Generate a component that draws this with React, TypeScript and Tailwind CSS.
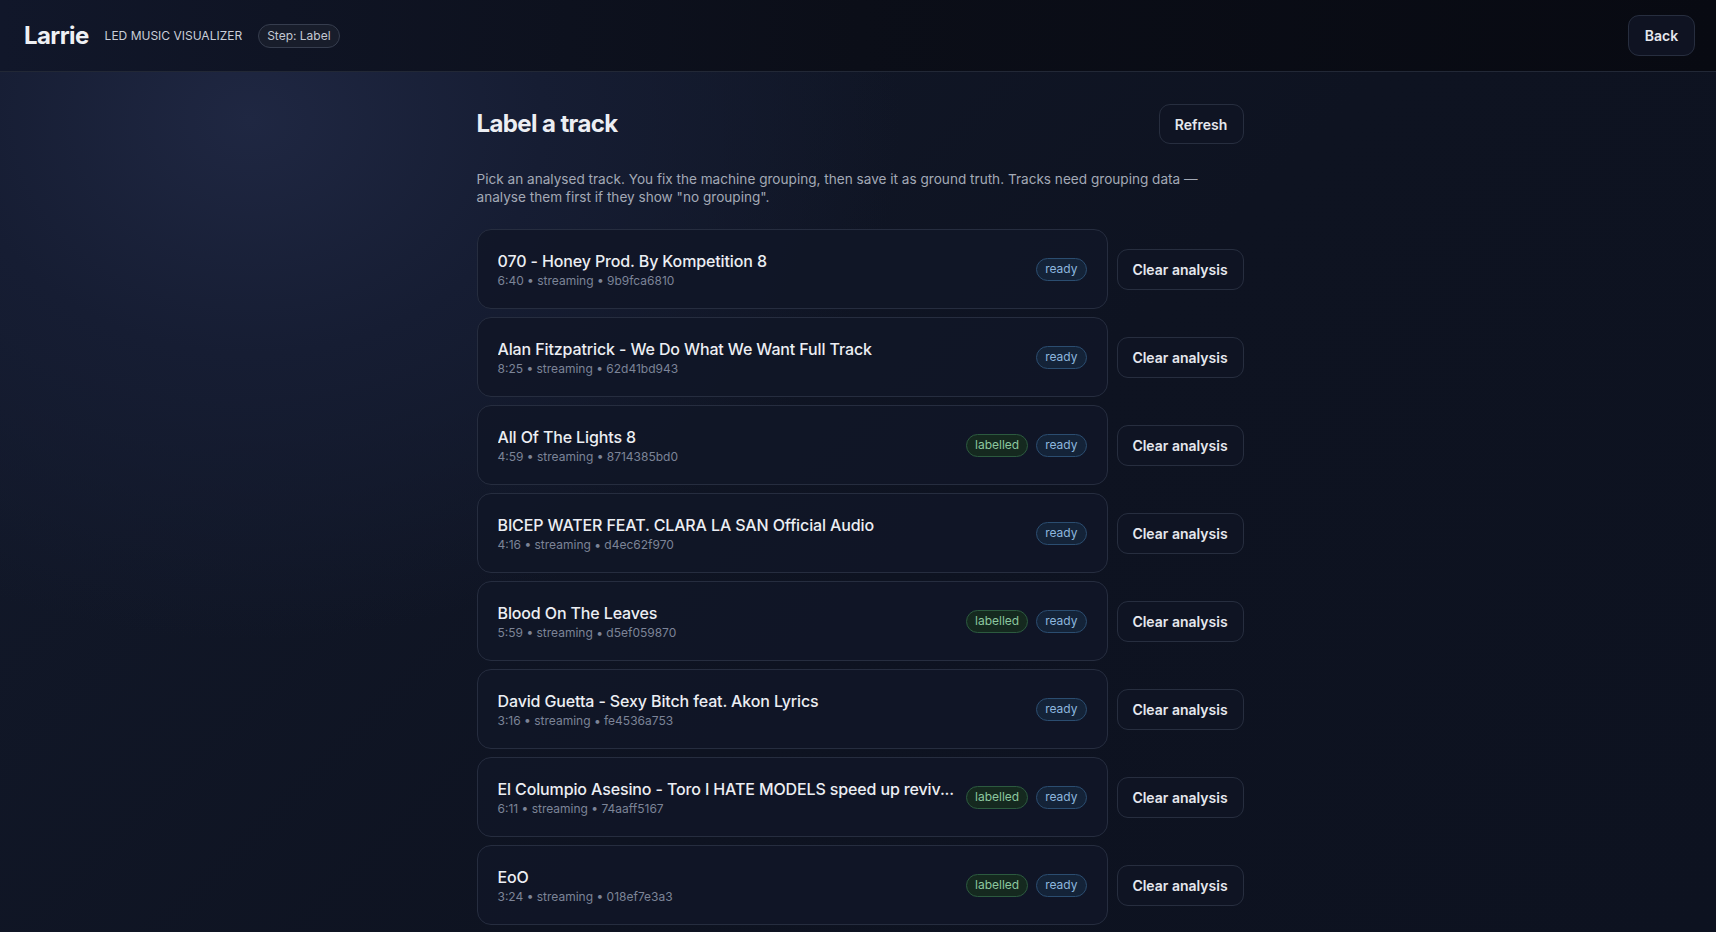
const tracks = [
  { title: '070 - Honey Prod. By Kompetition 8', duration: '6:40', id: '9b9fca6810', labelled: false },
  { title: 'Alan Fitzpatrick - We Do What We Want Full Track', duration: '8:25', id: '62d41bd943', labelled: false },
  { title: 'All Of The Lights 8', duration: '4:59', id: '8714385bd0', labelled: true },
  { title: 'BICEP WATER FEAT. CLARA LA SAN Official Audio', duration: '4:16', id: 'd4ec62f970', labelled: false },
  { title: 'Blood On The Leaves', duration: '5:59', id: 'd5ef059870', labelled: true },
  { title: 'David Guetta - Sexy Bitch feat. Akon Lyrics', duration: '3:16', id: 'fe4536a753', labelled: false },
  { title: 'El Columpio Asesino - Toro I HATE MODELS speed up reviv...', duration: '6:11', id: '74aaff5167', labelled: true },
  { title: 'EoO', duration: '3:24', id: '018ef7e3a3', labelled: true },
];

function TrackRow({ track }: { track: (typeof tracks)[number] }) {
  return (
    <div className="flex items-center gap-[9px]">
      <button className="flex-1 min-w-0 h-[80px] flex items-center gap-2 px-5 rounded-[14px] border border-[#262d3f] bg-[#111627]/90 text-left">
        <div className="flex-1 min-w-0">
          <div className="truncate text-[16px] leading-6 font-medium tracking-[-0.008em] text-[#eceef3]">{track.title}</div>
          <div className="text-[12px] leading-4 text-[#7c8497]">
            {track.duration} • streaming • {track.id}
          </div>
        </div>
        <div className="flex items-center gap-2 shrink-0">
          {track.labelled && (
            <span className="h-[23px] flex items-center px-2 rounded-full border border-[#2c5a3f] bg-[#15291f] text-[12px] text-[#8cc79f]">
              labelled
            </span>
          )}
          <span className="h-[23px] flex items-center px-2 rounded-full border border-[#2b4d70] bg-[#142338] text-[12px] text-[#8db6de]">
            ready
          </span>
        </div>
      </button>
      <button className="shrink-0 h-[41px] w-[127px] rounded-[11px] border border-[#272e3f] bg-[#0f1423] text-[14px] font-semibold text-[#e6e8ee]">
        Clear analysis
      </button>
    </div>
  );
}

export default function App() {
  return (
    <div
      className="min-h-screen h-[932px] overflow-hidden text-white bg-[#0e1321] bg-[radial-gradient(ellipse_650px_520px_at_250px_120px,#1f2742_0%,#161d33_45%,transparent_100%),linear-gradient(135deg,#131a2c_0%,#0e1321_55%,#0d1220_100%)]"
      style={{ fontFamily: 'Inter, "Noto Sans", sans-serif' }}
    >
      <header className="h-[72px] flex items-center justify-between pl-6 pr-[21px] border-b border-[#222836] bg-gradient-to-r from-[#11172a] via-[#0b0e18] to-[#080a12]">
        <div className="flex items-center gap-4">
          <span className="text-[24px] font-bold text-[#eef0f4] tracking-tight">Larrie</span>
          <span className="text-[12px] text-[#c9ced8]">LED MUSIC VISUALIZER</span>
          <span className="h-6 flex items-center px-2 rounded-full border border-[#363d4e] bg-[#181d2b] text-[12px] text-[#c3c8d2]">
            Step: Label
          </span>
        </div>
        <button className="h-[41px] w-[67px] rounded-[11px] border border-[#272e3f] bg-[#0f1322] text-[14px] font-semibold text-[#e6e8ee]">
          Back
        </button>
      </header>

      <div className="pl-1">
        <main className="w-[767px] mx-auto pt-8">
          <div className="flex items-center justify-between h-10">
            <h1 className="text-[24px] font-bold text-[#eceef3] tracking-tight">Label a track</h1>
            <button className="h-10 w-[85px] rounded-[11px] border border-[#272e3f] bg-[#0f1423] text-[14px] font-semibold text-[#e6e8ee]">
              Refresh
            </button>
          </div>

          <p className="mt-[26px] text-[13.6px] leading-[18px] text-[#a3a9b6]">
            Pick an analysed track. You fix the machine grouping, then save it as ground truth. Tracks need grouping data —
            analyse them first if they show "no grouping".
          </p>

          <div className="mt-[23px] flex flex-col gap-2">
            {tracks.map((t) => (
              <TrackRow key={t.id} track={t} />
            ))}
          </div>
        </main>
      </div>
    </div>
  );
}
